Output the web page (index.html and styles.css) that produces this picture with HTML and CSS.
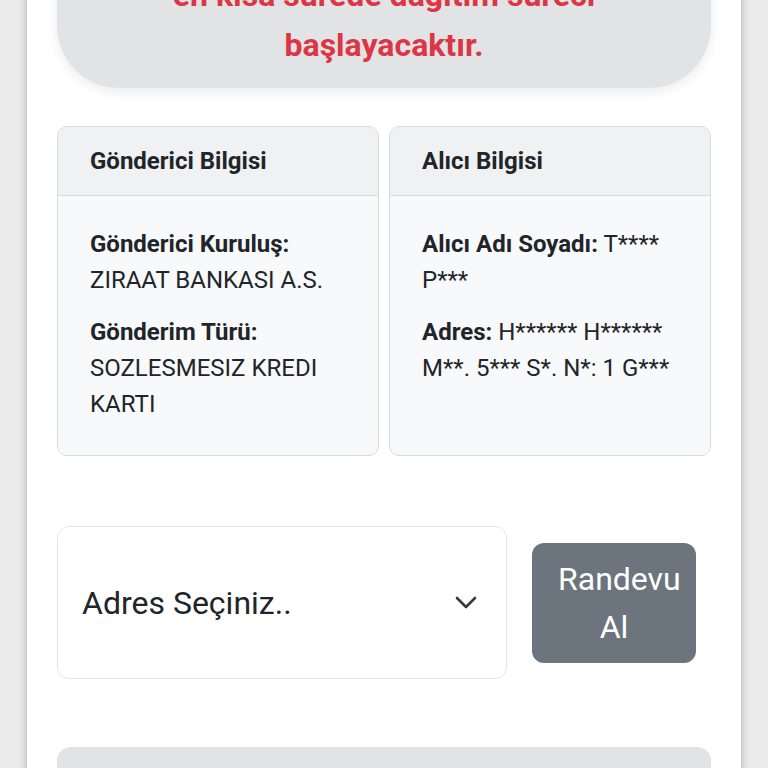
FILE: index.html
```html
<!DOCTYPE html>
<html lang="tr">
<head>
<meta charset="utf-8">
<title>Gönderi Takip</title>
<link rel="stylesheet" href="styles.css">
</head>
<body>
<div class="page">
  <div class="banner">en kısa sürede dağıtım süreci başlayacaktır.</div>

  <div class="cards">
    <div class="card">
      <div class="card-header">Gönderici Bilgisi</div>
      <div class="card-body">
        <p><b>Gönderici Kuruluş:</b><br>ZIRAAT BANKASI A.S.</p>
        <p><b>Gönderim Türü:</b><br>SOZLESMESIZ KREDI KARTI</p>
      </div>
    </div>
    <div class="card">
      <div class="card-header">Alıcı Bilgisi</div>
      <div class="card-body">
        <p><b>Alıcı Adı Soyadı:</b> T**** P***</p>
        <p><b>Adres:</b> H****** H****** M**. 5*** S*. N*: 1 G***</p>
      </div>
    </div>
  </div>

  <div class="action-row">
    <div class="select">
      <span class="select-text">Adres Seçiniz..</span>
      <svg class="chevron" width="22" height="14" viewBox="0 0 22 14"><path d="M2 2 L11 11 L20 2" fill="none" stroke="#343a40" stroke-width="2.6" stroke-linecap="round" stroke-linejoin="round"/></svg>
    </div>
    <button class="btn">Randevu Al</button>
  </div>

  <div class="bottom-box"></div>
</div>
</body>
</html>
```
FILE: styles.css
```css
html, body {
  margin: 0;
  padding: 0;
  background: #ebebeb;
  height: 100%;
  overflow: hidden;
}
body {
  font-family: Roboto, "Liberation Sans", sans-serif;
  color: #212529;
}
.page {
  margin-left: 27px;
  width: 714px;
  min-height: 900px;
  background: #fff;
  box-shadow: 0 0 8px rgba(0, 0, 0, 0.28);
  padding: 0 30px;
  box-sizing: border-box;
}
.banner {
  margin-top: -46px;
  background: #e2e3e5;
  border-radius: 0 0 62px 62px;
  padding: 16px 86px 18px;
  text-align: center;
  color: #dc3545;
  font-weight: 700;
  font-size: 32px;
  line-height: 50px;
  box-shadow: 0 4px 12px rgba(0, 0, 0, 0.08);
}
.cards {
  margin-top: 38px;
  display: grid;
  grid-template-columns: 1fr 1fr;
  gap: 10px;
}
.card {
  border: 1px solid #d9dbdd;
  border-radius: 10px;
  background: #f8f9fa;
  overflow: hidden;
  font-size: 24px;
  line-height: 36px;
}
.card-header {
  background: #f0f1f2;
  border-bottom: 1px solid #d9dbdd;
  padding: 16px 32px;
  font-weight: 700;
}
.card-body {
  padding: 30px 32px 33px;
}
.card-body p {
  margin: 0 0 16px;
}
.card-body p:last-child {
  margin-bottom: 0;
}
.card-body b {
  font-weight: 700;
}
.action-row {
  margin-top: 70px;
  display: flex;
  align-items: center;
}
.select {
  width: 450px;
  height: 153px;
  box-sizing: border-box;
  border: 1px solid #e3e5e8;
  border-radius: 12px;
  background: #fff;
  display: flex;
  align-items: center;
  justify-content: space-between;
  padding: 0 29px 0 24px;
  font-size: 32px;
  color: #212529;
}
.btn {
  margin-left: 25px;
  width: 164px;
  padding: 12px 26px;
  border: 0;
  border-radius: 12px;
  background: #6c757d;
  color: #fff;
  font-family: Roboto, "Liberation Sans", sans-serif;
  font-size: 32px;
  line-height: 48px;
  text-align: center;
}
.bottom-box {
  margin-top: 68px;
  height: 120px;
  background: #e2e3e5;
  border-radius: 14px;
}
```
